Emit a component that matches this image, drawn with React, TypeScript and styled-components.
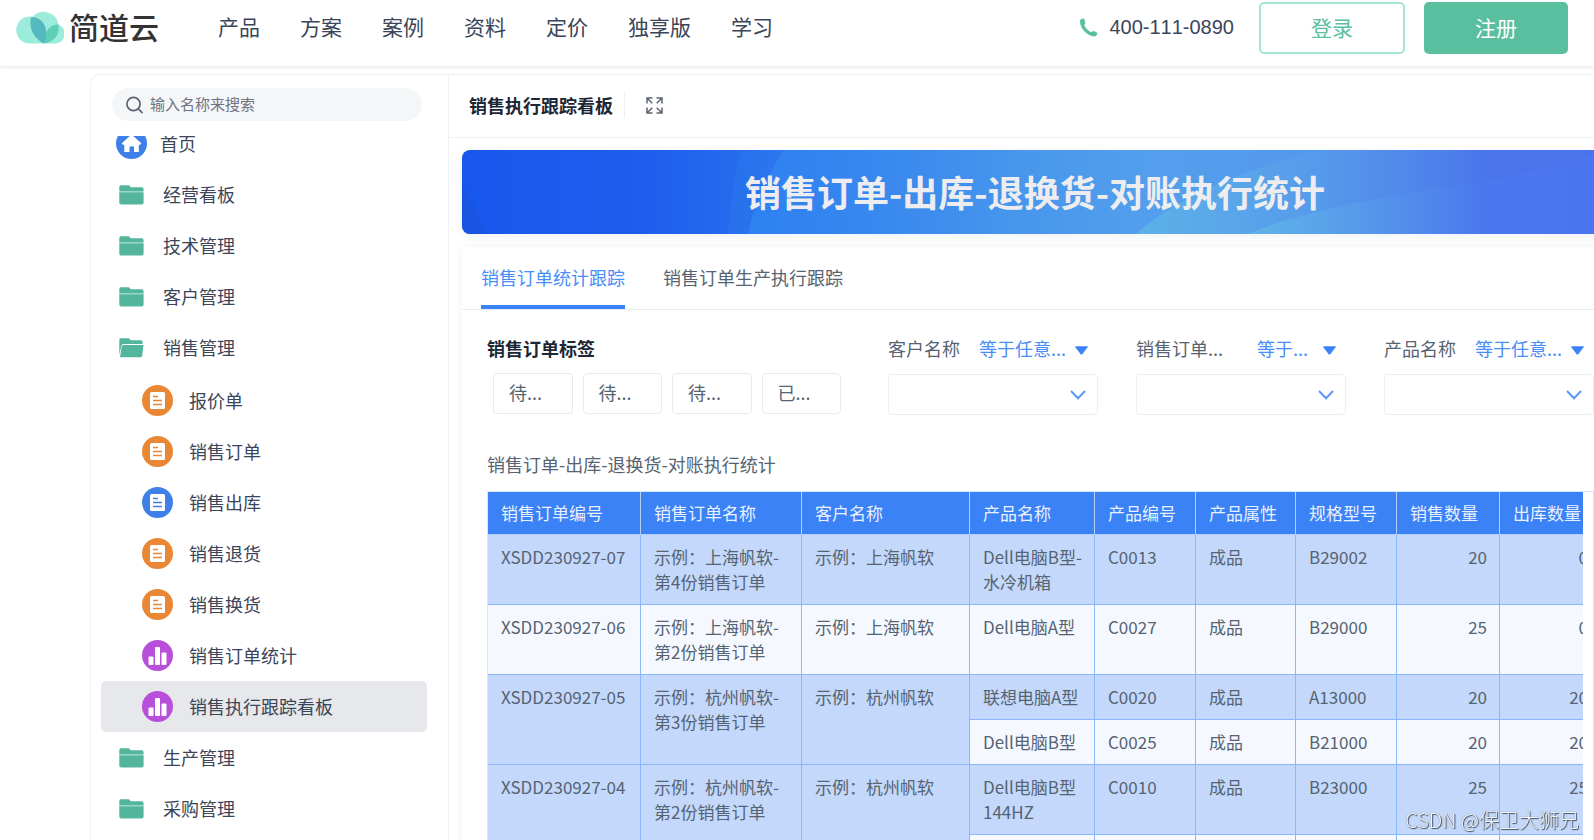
import React from 'react';
import styled, { createGlobalStyle } from 'styled-components';

const CJK = '"Noto Sans CJK SC", "Liberation Sans", sans-serif';

const color = {
  text: '#3b4559',
  muted: '#566372',
  strong: '#1b2735',
  line: '#eff0f2',
  blue: '#3b82f6',
  green: '#5abf9f',
  folder: '#52b59c',
};

const GlobalStyle = createGlobalStyle`
  *, *::before, *::after { box-sizing: border-box; }
  body { margin: 0; background: #fff; color: ${color.text}; font-family: ${CJK}; }
  button, input, select { font-family: inherit; margin: 0; }
  ul { list-style: none; margin: 0; padding: 0; }
  a { color: inherit; text-decoration: none; }
`;

const Page = styled.div`
  height: 100vh;
  display: flex;
  flex-direction: column;
  overflow: hidden;
`;

/* ---------- site header ---------- */

const Header = styled.header`
  flex: none;
  height: 66px;
  padding: 2px 26px 12px 16px;
  display: flex;
  align-items: center;
  box-shadow: 0 2px 3px rgba(0, 0, 0, 0.07);
`;

const Brand = styled.a`
  display: flex;
  align-items: center;
  gap: 5px;
  width: 202px;
  padding-bottom: 2px;
  color: #333;
  font-size: 30px;
  line-height: 44px;
  font-weight: 500;
  span { padding-bottom: 2px; }
`;

const Nav = styled.nav`
  display: flex;
  gap: 40px;
  padding-bottom: 4px;
  font-size: 21px;
  line-height: 30px;
`;

const Phone = styled.a`
  margin-left: auto;
  margin-right: 25px;
  padding-bottom: 2px;
  display: flex;
  align-items: center;
  gap: 11px;
  font: 20px/30px "Liberation Sans", Arial, sans-serif;
  font-kerning: none;
`;

const HeaderButton = styled.button<{ $primary?: boolean }>`
  width: ${p => (p.$primary ? 144 : 146)}px;
  height: 52px;
  margin-left: ${p => (p.$primary ? 19 : 0)}px;
  padding: 0 0 3px;
  border: ${p => (p.$primary ? 0 : '2px solid #a5e5d2')};
  border-radius: 5px;
  background: ${p => (p.$primary ? color.green : '#fff')};
  color: ${p => (p.$primary ? '#fff' : color.green)};
  font-size: 21px;
  line-height: 30px;
`;

/* ---------- panel ---------- */

const Panel = styled.div`
  flex: 1;
  min-height: 0;
  margin: 8px 0 0 90px;
  display: flex;
  border: 1px solid ${color.line};
  border-width: 1px 0 0 1px;
  border-radius: 10px 0 0 0;
`;

const Sidebar = styled.aside`
  flex: none;
  width: 358px;
  display: flex;
  flex-direction: column;
  border-right: 1px solid ${color.line};
`;

const Search = styled.label`
  flex: none;
  display: flex;
  align-items: center;
  gap: 6px;
  height: 33px;
  margin: 13px 26px 15px 21px;
  padding: 0 14px;
  border-radius: 17px;
  background: #f5f6f8;
`;

const SearchInput = styled.input`
  flex: 1;
  min-width: 0;
  border: 0;
  outline: 0;
  padding: 0 0 2px;
  background: transparent;
  font-size: 15px;
  line-height: 24px;
  &::placeholder { color: #6d7480; opacity: 1; }
`;

const Scroller = styled.div`
  flex: 1;
  min-height: 0;
  overflow: hidden;
  padding: 0 21px 0 10px;
`;

/* the list is scrolled a little, so that its first entry is cut by the search box */
const Menu = styled.ul`
  margin-top: -18px;
`;

const SubMenu = styled.ul`
  padding-top: 2px;
`;

const Item = styled.a<{ $level?: number; $icon?: 'round' | 'folder'; $active?: boolean }>`
  display: flex;
  align-items: center;
  height: 51px;
  gap: ${p => (p.$level ? 16 : p.$icon === 'folder' ? 19 : 13)}px;
  padding-left: ${p => (p.$level ? 41 : p.$icon === 'folder' ? 18 : 15)}px;
  border-radius: 5px;
  background: ${p => (p.$active ? '#e6e8ec' : 'transparent')};
  font-size: 18px;
  line-height: 26px;
  span { padding-bottom: 2px; }
`;

/* ---------- dashboard ---------- */

const Main = styled.main`
  flex: 1;
  min-width: 0;
  margin-right: -14px;
`;

const TitleBar = styled.div`
  height: 63px;
  display: flex;
  align-items: center;
  padding: 0 0 2px 20px;
  border-bottom: 1px solid ${color.line};
`;

const Title = styled.h1`
  margin: 0;
  padding-right: 11px;
  border-right: 1px solid ${color.line};
  color: ${color.strong};
  font-size: 18px;
  line-height: 26px;
  font-weight: 700;
`;

const IconButton = styled.button`
  display: flex;
  margin-left: 21px;
  padding: 0;
  border: 0;
  background: none;
`;

const Banner = styled.div`
  position: relative;
  height: 84px;
  margin: 12px 0 13px 13px;
  padding-bottom: 3px;
  border-radius: 8px;
  overflow: hidden;
  display: flex;
  align-items: center;
  justify-content: center;
  box-shadow: 0 2px 10px rgba(40, 60, 120, 0.08);
`;

const BannerArt = styled.svg`
  position: absolute;
  inset: 0;
  width: 100%;
  height: 100%;
`;

const BannerText = styled.h2`
  position: relative;
  margin: 0;
  color: #ededf0;
  font-size: 36px;
  line-height: 52px;
  font-weight: 700;
  white-space: nowrap;
`;

const Card = styled.section`
  margin-left: 13px;
  min-height: 620px;
  box-shadow: 0 0 9px rgba(40, 60, 120, 0.07);
`;

const Tabs = styled.div`
  display: flex;
  gap: 38px;
  height: 63px;
  padding-left: 19px;
  border-bottom: 1px solid #e8eaed;
`;

const Tab = styled.button<{ $active?: boolean }>`
  padding: 2px 0 0;
  border: 0;
  border-bottom: 4px solid ${p => (p.$active ? color.blue : 'transparent')};
  background: none;
  color: ${p => (p.$active ? '#4a8df8' : color.muted)};
  font-size: 18px;
  line-height: 26px;
`;

const Filters = styled.div`
  display: flex;
  gap: 38px;
  padding: 25px 0 36px 25px;
  font-size: 18px;
  line-height: 26px;
`;

const TagFilter = styled.fieldset`
  flex: none;
  width: 363px;
  margin: 0;
  padding: 0;
  border: 0;
`;

const TagLegend = styled.legend`
  padding: 0;
  margin-bottom: 12px;
  color: ${color.strong};
  font-weight: 700;
`;

const TagRow = styled.div`
  display: flex;
  gap: 10px;
  padding: 0 9px 0 6px;
`;

const Tag = styled.button`
  flex: 1;
  height: 41px;
  padding: 0 0 3px 15px;
  border: 1px solid #e8eaed;
  border-radius: 4px;
  background: #fff;
  color: ${color.muted};
  font-size: 18px;
  text-align: left;
`;

const Filter = styled.div`
  flex: none;
  width: 210px;
`;

const FilterHead = styled.div`
  display: flex;
  justify-content: space-between;
  padding-right: 10px;
  margin-bottom: 13px;
  white-space: nowrap;
  color: ${color.muted};
`;

const Operator = styled.button`
  display: flex;
  align-items: center;
  gap: 9px;
  padding: 0;
  border: 0;
  background: none;
  color: #4a8df8;
  font-size: 18px;
  line-height: 26px;
  span { min-width: 57px; text-align: left; }
  svg { margin-top: 4px; }
`;

const SelectBox = styled.div`
  display: grid;
  align-items: center;
  select, svg { grid-area: 1 / 1; }
  svg { justify-self: end; margin-right: 12px; pointer-events: none; }
`;

const Select = styled.select`
  appearance: none;
  width: 100%;
  height: 41px;
  padding: 0 36px 0 12px;
  border: 1px solid #eceef0;
  border-radius: 4px;
  background: #fff;
  color: ${color.muted};
  font-size: 18px;
`;

const Caption = styled.h3`
  margin: 0 0 14px 25px;
  color: ${color.muted};
  font-size: 18px;
  line-height: 26px;
  font-weight: 400;
`;

const Frame = styled.div`
  margin: 0 14px 0 25px;
  padding-right: 10px;
  border: 1px solid #d6e5fd;
`;

const Clip = styled.div`
  overflow: hidden;
`;

const Table = styled.table`
  width: 1113px;
  table-layout: fixed;
  border-collapse: separate;
  border-spacing: 0;
  font-size: 17px;
  line-height: 25px;
  white-space: pre;
`;

const Th = styled.th`
  height: 43px;
  padding: 0 0 2px 13px;
  border: 1px solid #b3d0fc;
  border-width: 0 1px 1px 0;
  background: ${color.blue};
  color: #e9f1ff;
  font-weight: 400;
  text-align: left;
`;

const Td = styled.td<{ $tint?: boolean; $num?: boolean }>`
  padding: 9px 12px 10px 13px;
  border: 1px solid #8ab7fa;
  border-width: 0 1px 1px 0;
  background: ${p => (p.$tint ? '#c3d8fb' : '#f5f9ff')};
  color: ${color.muted};
  text-align: ${p => (p.$num ? 'right' : 'left')};
  vertical-align: top;
`;

const Watermark = styled.div`
  position: fixed;
  right: 15px;
  bottom: 5px;
  color: #f4f5f7;
  font-size: 20px;
  line-height: 30px;
  font-weight: 300;
  text-shadow: 1px 1px 1px rgba(40, 50, 65, 0.85), 0 0 1px rgba(40, 50, 65, 0.6);
`;

/* ---------- icons ---------- */

const Logo = () => (
  <svg width="48" height="34" viewBox="0 0 48 34" aria-hidden="true">
    <path d="M13.500 33.500A13.500 13.500 0 1 1 16.600 6.800A15 15 0 0 1 42.500 14.600A9.800 9.800 0 0 1 38 33.500Z" fill="#9cecdc" />
    <path d="M28 33.500C28 22 33 14.500 42.500 14.500C44 25 38 32 28 33.500Z" fill="#5fd0b8" />
    <path d="M28 33.500C17 28 12.500 18 15.200 7C27 7 34 19 28 33.500Z" fill="#55b8be" />
  </svg>
);

const PhoneIcon = () => (
  <svg width="19" height="19" viewBox="0 0 19 19" aria-hidden="true">
    <path d="M1 2.600Q2.500 .2 5 .7Q6.400 3 6.300 5.400Q5.800 6.600 5.200 7.300Q7.500 12 12.300 14.200Q13.300 13.300 14.400 13Q16.800 13.400 18.500 15Q18.600 17 16.300 18.300Q10.500 19 5.300 13.300Q.6 8 1 2.600Z" fill={color.green} />
  </svg>
);

const SearchIcon = () => (
  <svg width="18" height="18" viewBox="0 0 18 18" fill="none" stroke="#5a6472" strokeWidth="1.700" strokeLinecap="round" aria-hidden="true">
    <circle cx="7.500" cy="8" r="6.600" />
    <path d="M12.500 13l3.600 3.600" />
  </svg>
);

const HomeIcon = () => (
  <svg width="31" height="31" viewBox="0 0 31 31" aria-hidden="true">
    <circle cx="15.500" cy="15.500" r="15.500" fill="#3f7fe8" />
    <path d="M15.500 6.500L25.300 15.300L23.800 17H22.800V24H18V18.500H13.500V24H8.300V17H7.200L5.800 15.300Z" fill="#fff" />
  </svg>
);

const FolderIcon = ({ open }: { open?: boolean }) => (
  <svg width="25" height="20" viewBox="0 0 25 20" aria-hidden="true">
    {open ? (
      <>
        <path d="M.3 17V2Q.3 .3 2 .3H9.500Q11 .3 11.600 2.300H22Q23.600 2.300 23.600 4V6H4.500Q2.800 6 2.400 7.500Z" fill={color.folder} />
        <path d="M4.300 7H24.500L23.200 17.800Q22.900 19.300 21.400 19.300H1L2.700 8.500Q3 7 4.300 7Z" fill={color.folder} />
      </>
    ) : (
      <>
        <path d="M.3 6V2Q.3 .3 2 .3H9.500Q11 .3 11.600 2.300H22.600Q24.600 2.300 24.600 4.300V6Z" fill={color.folder} />
        <path d="M.3 6H24.600V8H.3Z" fill="#9ad6c7" />
        <path d="M.3 7.600H24.600V17.600Q24.600 19.600 22.600 19.600H2.300Q.3 19.600 .3 17.600Z" fill={color.folder} />
      </>
    )}
  </svg>
);

const FormIcon = ({ fill }: { fill: string }) => (
  <svg width="31" height="31" viewBox="0 0 31 31" aria-hidden="true">
    <circle cx="15.500" cy="15.500" r="15.500" fill={fill} />
    <rect x="8" y="7" width="15" height="17" rx="1.500" fill="#fff" />
    <path d="M11 11.500h5M11 15.500h9M11 19.500h9" stroke={fill} strokeWidth="1.500" />
  </svg>
);

const ChartIcon = () => (
  <svg width="31" height="31" viewBox="0 0 31 31" aria-hidden="true">
    <circle cx="15.500" cy="15.500" r="15.500" fill="#b84fdb" />
    <rect x="6.500" y="16.500" width="5" height="8.500" rx="1" fill="#fff" />
    <rect x="13" y="7" width="5" height="18" rx="1" fill="#fff" />
    <rect x="19.500" y="12.500" width="5" height="12.500" rx="1" fill="#fff" />
  </svg>
);

const ExpandIcon = () => (
  <svg width="17" height="17" viewBox="0 0 17 17" fill="none" stroke="#5a6472" strokeWidth="1.500" aria-hidden="true">
    <path d="M1 6.500V1H6.500M1.200 1.200L6.300 6.300M10.500 1H16V6.500M15.800 1.200L10.700 6.300M1 10.500V16H6.500M1.200 15.800L6.300 10.700M10.500 16H16V10.500M15.800 15.800L10.700 10.700" />
  </svg>
);

const Triangle = () => (
  <svg width="13" height="9" viewBox="0 0 13 9" aria-hidden="true">
    <path d="M.8 .3H12.200Q13.200 .4 12.500 1.400L7.300 8.200Q6.500 9 5.700 8.200L.5 1.400Q-.2 .4 .8 .3Z" fill={color.blue} />
  </svg>
);

const Chevron = () => (
  <svg width="16" height="10" viewBox="0 0 16 10" fill="none" stroke="#5b96f8" strokeWidth="2" aria-hidden="true">
    <path d="M1 1L8 8.300L15 1" />
  </svg>
);

const BannerPicture = () => (
  <BannerArt viewBox="0 0 1146 84" preserveAspectRatio="none" aria-hidden="true">
    <defs>
      <linearGradient id="base" x1="0" x2="1">
        <stop offset="0" stopColor="#1757ee" />
        <stop offset="0.160" stopColor="#1e5eed" />
        <stop offset="0.270" stopColor="#2870ec" />
        <stop offset="0.480" stopColor="#4796ec" />
        <stop offset="0.600" stopColor="#539fed" />
        <stop offset="0.740" stopColor="#5498ec" />
        <stop offset="0.890" stopColor="#4b75ea" />
        <stop offset="1" stopColor="#4b72ea" />
      </linearGradient>
      <linearGradient id="arc" x1="0" x2="1">
        <stop offset="0" stopColor="#2f84f2" stopOpacity="0.850" />
        <stop offset="1" stopColor="#4b9aee" stopOpacity="0" />
      </linearGradient>
      <linearGradient id="wave" x1="0" x2="1">
        <stop offset="0" stopColor="#5cb2e8" />
        <stop offset="0.300" stopColor="#5aa6e9" stopOpacity="0.800" />
        <stop offset="1" stopColor="#4f84ee" stopOpacity="0" />
      </linearGradient>
      <linearGradient id="wave2" x1="0" x2="1">
        <stop offset="0" stopColor="#5eb5e7" />
        <stop offset="0.350" stopColor="#5596ec" />
        <stop offset="0.650" stopColor="#4c78ee" />
        <stop offset="1" stopColor="#4b74f0" />
      </linearGradient>
    </defs>
    <rect width="1146" height="84" fill="url(#base)" />
    <path d="M0 33Q14 56 24 84H0Z" fill="#1b54dc" opacity="0.700" />
    <path d="M280 0Q268 40 266 84H600V0Z" fill="url(#arc)" opacity="0.300" />
    <path d="M322 0Q296 38 286 84H600V0Z" fill="url(#arc)" />
    <path d="M674 84Q736 30 860 0H1040V84Z" fill="url(#wave)" />
    <path d="M785 84Q860 54 1000 35Q1080 22 1146 0V84Z" fill="url(#wave2)" />
  </BannerArt>
);

/* ---------- data ---------- */

const navItems = ['产品', '方案', '案例', '资料', '定价', '独享版', '学习'];

const ORANGE = '#e98735';
const BLUE = '#3f7fe8';

const salesItems = [
  { name: '报价单', icon: <FormIcon fill={ORANGE} /> },
  { name: '销售订单', icon: <FormIcon fill={ORANGE} /> },
  { name: '销售出库', icon: <FormIcon fill={BLUE} /> },
  { name: '销售退货', icon: <FormIcon fill={ORANGE} /> },
  { name: '销售换货', icon: <FormIcon fill={ORANGE} /> },
  { name: '销售订单统计', icon: <ChartIcon /> },
  { name: '销售执行跟踪看板', icon: <ChartIcon />, active: true },
];

const folders = [
  { name: '经营看板' },
  { name: '技术管理' },
  { name: '客户管理' },
  { name: '销售管理', children: salesItems },
  { name: '生产管理' },
  { name: '采购管理' },
];

const tags = ['待...', '待...', '待...', '已...'];

const filters = [
  { id: 'customer', label: '客户名称', op: '等于任意...' },
  { id: 'order', label: '销售订单...', op: '等于...' },
  { id: 'product', label: '产品名称', op: '等于任意...' },
];

const columns = [
  { name: '销售订单编号', width: 153 },
  { name: '销售订单名称', width: 161 },
  { name: '客户名称', width: 168 },
  { name: '产品名称', width: 125 },
  { name: '产品编号', width: 101 },
  { name: '产品属性', width: 100 },
  { name: '规格型号', width: 101 },
  { name: '销售数量', width: 103 },
  { name: '出库数量', width: 101 },
];

const orders = [
  {
    head: ['XSDD230927-07', '示例：上海帆软-\n第4份销售订单', '示例：上海帆软'],
    tint: true,
    lines: [['Dell电脑B型-\n水冷机箱', 'C0013', '成品', 'B29002', '20', '0']],
  },
  {
    head: ['XSDD230927-06', '示例：上海帆软-\n第2份销售订单', '示例：上海帆软'],
    tint: false,
    lines: [['Dell电脑A型', 'C0027', '成品', 'B29000', '25', '0']],
  },
  {
    head: ['XSDD230927-05', '示例：杭州帆软-\n第3份销售订单', '示例：杭州帆软'],
    tint: true,
    lines: [
      ['联想电脑A型', 'C0020', '成品', 'A13000', '20', '20'],
      ['Dell电脑B型', 'C0025', '成品', 'B21000', '20', '20'],
    ],
  },
  {
    head: ['XSDD230927-04', '示例：杭州帆软-\n第2份销售订单', '示例：杭州帆软'],
    tint: true,
    lines: [
      ['Dell电脑B型\n144HZ', 'C0010', '成品', 'B23000', '25', '25'],
      [' ', ' ', ' ', ' ', ' ', ' '],
    ],
  },
];

const TITLE = '销售订单-出库-退换货-对账执行统计';

export default function App() {
  return (
    <Page>
      <GlobalStyle />
      <Header>
        <Brand href="#"><Logo /><span>简道云</span></Brand>
        <Nav>{navItems.map(n => <a key={n} href="#">{n}</a>)}</Nav>
        <Phone href="tel:400-111-0890"><PhoneIcon />400-111-0890</Phone>
        <HeaderButton>登录</HeaderButton>
        <HeaderButton $primary>注册</HeaderButton>
      </Header>

      <Panel>
        <Sidebar>
          <Search>
            <SearchIcon />
            <SearchInput type="text" placeholder="输入名称来搜索" aria-label="输入名称来搜索" />
          </Search>
          <Scroller>
            <Menu>
              <li><Item href="#" $icon="round"><HomeIcon /><span>首页</span></Item></li>
              {folders.map(f => (
                <li key={f.name}>
                  <Item href="#" $icon="folder"><FolderIcon open={!!f.children} /><span>{f.name}</span></Item>
                  {f.children && (
                    <SubMenu>
                      {f.children.map(c => (
                        <li key={c.name}>
                          <Item href="#" $level={1} $active={c.active}>{c.icon}<span>{c.name}</span></Item>
                        </li>
                      ))}
                    </SubMenu>
                  )}
                </li>
              ))}
            </Menu>
          </Scroller>
        </Sidebar>

        <Main>
          <TitleBar>
            <Title>销售执行跟踪看板</Title>
            <IconButton aria-label="全屏"><ExpandIcon /></IconButton>
          </TitleBar>
          <Banner>
            <BannerPicture />
            <BannerText>{TITLE}</BannerText>
          </Banner>
          <Card>
            <Tabs role="tablist">
              <Tab role="tab" aria-selected $active>销售订单统计跟踪</Tab>
              <Tab role="tab">销售订单生产执行跟踪</Tab>
            </Tabs>
            <Filters>
              <TagFilter>
                <TagLegend>销售订单标签</TagLegend>
                <TagRow>{tags.map((t, i) => <Tag key={i}>{t}</Tag>)}</TagRow>
              </TagFilter>
              {filters.map(f => (
                <Filter key={f.id}>
                  <FilterHead>
                    <label htmlFor={f.id}>{f.label}</label>
                    <Operator><span>{f.op}</span><Triangle /></Operator>
                  </FilterHead>
                  <SelectBox>
                    <Select id={f.id}><option value="" /></Select>
                    <Chevron />
                  </SelectBox>
                </Filter>
              ))}
            </Filters>
            <Caption>{TITLE}</Caption>
            <Frame>
              <Clip>
                <Table>
                  <colgroup>{columns.map(c => <col key={c.name} width={c.width} />)}</colgroup>
                  <thead>
                    <tr>{columns.map(c => <Th key={c.name} scope="col">{c.name}</Th>)}</tr>
                  </thead>
                  <tbody>
                    {orders.map(o => o.lines.map((line, i) => (
                      <tr key={o.head[0] + i}>
                        {i === 0 && o.head.map(h => (
                          <Td key={h} rowSpan={o.lines.length} $tint={o.tint}>{h}</Td>
                        ))}
                        {line.map((v, j) => (
                          <Td key={j} $tint={o.tint && i === 0} $num={j > 3}>{v}</Td>
                        ))}
                      </tr>
                    )))}
                  </tbody>
                </Table>
              </Clip>
            </Frame>
          </Card>
        </Main>
      </Panel>
      <Watermark>CSDN @保卫大狮兄</Watermark>
    </Page>
  );
}
